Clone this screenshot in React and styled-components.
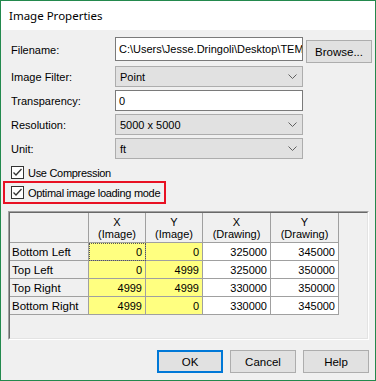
import styled, { createGlobalStyle } from "styled-components";

const GlobalStyle = createGlobalStyle`
  html, body {
    margin: 0;
    padding: 0;
    background: #ffffff;
  }
  * {
    box-sizing: border-box;
  }
`;

const corners = [
  { name: "Bottom Left", xi: "0", yi: "0", xd: "325000", yd: "345000" },
  { name: "Top Left", xi: "0", yi: "4999", xd: "325000", yd: "350000" },
  { name: "Top Right", xi: "4999", yi: "4999", xd: "330000", yd: "350000" },
  { name: "Bottom Right", xi: "4999", yi: "0", xd: "330000", yd: "345000" },
];

function Chevron() {
  return (
    <svg width="9" height="5" viewBox="0 0 9 5">
      <polyline points="0.5,0.5 4.5,4.5 8.5,0.5" fill="none" stroke="#606060" strokeWidth="1" />
    </svg>
  );
}

function CheckBox() {
  return (
    <Box>
      <svg width="11" height="11" viewBox="0 0 11 11">
        <polyline points="1.5,5.5 4,8 9.5,2" fill="none" stroke="#333" strokeWidth="1.3" />
      </svg>
    </Box>
  );
}

function Combo({ value }) {
  return (
    <ComboBox>
      <span>{value}</span>
      <Chevron />
    </ComboBox>
  );
}

export default function App() {
  return (
    <>
      <GlobalStyle />
      <Window>
        <TitleBar>Image Properties</TitleBar>
        <Body>
          <Form>
            <Label>Filename:</Label>
            <TextBox h={24}>C:\Users\Jesse.Dringoli\Desktop\TEM</TextBox>
            <Button top={3}>Browse...</Button>

            <Label>Image Filter:</Label>
            <Combo value="Point" />
            <span />

            <Label>Transparency:</Label>
            <TextBox h={21}>0</TextBox>
            <span />

            <Label>Resolution:</Label>
            <Combo value="5000 x 5000" />
            <span />

            <Label>Unit:</Label>
            <Combo value="ft" />
            <span />
          </Form>

          <CheckRow>
            <CheckBox />
            <span>Use Compression</span>
          </CheckRow>

          <Highlight>
            <CheckRow inner>
              <CheckBox />
              <span>Optimal image loading mode</span>
            </CheckRow>
          </Highlight>

          <GridFrame>
            <GridInner>
              <Grid>
                <HeadCell />
                <HeadCell>X<br />(Image)</HeadCell>
                <HeadCell>Y<br />(Image)</HeadCell>
                <HeadCell>X<br />(Drawing)</HeadCell>
                <HeadCell>Y<br />(Drawing)</HeadCell>
                {corners.map((c, i) => (
                  <Row key={c.name}>
                    <RowHead>{c.name}</RowHead>
                    <Cell tone="yellow" focused={i === 0}>{c.xi}</Cell>
                    <Cell tone="yellow">{c.yi}</Cell>
                    <Cell>{c.xd}</Cell>
                    <Cell>{c.yd}</Cell>
                  </Row>
                ))}
              </Grid>
            </GridInner>
          </GridFrame>

          <Buttons>
            <Button primary>OK</Button>
            <Button>Cancel</Button>
            <Button>Help</Button>
          </Buttons>
        </Body>
      </Window>
    </>
  );
}

const Window = styled.div`
  width: 376px;
  height: 381px;
  border: 1px solid #23894d;
  display: flex;
  flex-direction: column;
  font-family: "Liberation Sans", Arial, sans-serif;
  font-size: 11px;
  color: #000;
  background: #f0f0f0;
`;

const TitleBar = styled.div`
  height: 30px;
  background: #fff;
  display: flex;
  align-items: center;
  padding-left: 8px;
  font-family: "Noto Sans", "Open Sans", sans-serif;
  font-size: 11.5px;
  color: #000;
`;

const Body = styled.div`
  flex: 1;
  display: flex;
  flex-direction: column;
  padding: 7px 6px 7px 7px;
`;

const Form = styled.div`
  display: grid;
  grid-template-columns: 101px 188px 66px;
  column-gap: 3px;
  row-gap: 3px;
  margin-left: 3px;
`;

const Label = styled.div`
  display: flex;
  align-items: center;
  white-space: nowrap;
`;

const TextBox = styled.div`
  height: ${(p) => p.h}px;
  background: #fff;
  border: 1px solid #7a7a7a;
  padding: 0 3px;
  display: flex;
  align-items: center;
  white-space: nowrap;
  overflow: hidden;
`;

const ComboBox = styled.div`
  height: 21px;
  background: #e1e1e1;
  border: 1px solid #adadad;
  padding: 0 5px 0 4px;
  display: flex;
  align-items: center;
  justify-content: space-between;
  white-space: nowrap;
`;

const Button = styled.div`
  align-self: start;
  margin-top: ${(p) => p.top || 0}px;
  width: 66px;
  height: 23px;
  background: #e1e1e1;
  border: ${(p) => (p.primary ? "2px solid #0078d7" : "1px solid #adadad")};
  display: flex;
  align-items: center;
  justify-content: center;
  font-size: 11.5px;
`;

const CheckRow = styled.div`
  display: flex;
  align-items: center;
  gap: 4px;
  height: 13px;
  margin-top: ${(p) => (p.inner ? 0 : 7)}px;
  margin-left: ${(p) => (p.inner ? 0 : 3)}px;
  white-space: nowrap;
  font-size: 11px;
  letter-spacing: -0.3px;
`;

const Box = styled.div`
  width: 13px;
  height: 13px;
  border: 1px solid #333;
  background: #fff;
  display: flex;
  align-items: center;
  justify-content: center;
`;

const Highlight = styled.div`
  align-self: flex-start;
  margin-top: 2px;
  margin-left: -5px;
  border: 2px solid #e81123;
  padding: 3px 4px 3px 6px;
`;

const GridFrame = styled.div`
  margin-top: 7px;
  height: 129px;
  border: 1px solid;
  border-color: #a0a0a0 #ffffff #ffffff #a0a0a0;
`;

const GridInner = styled.div`
  height: 100%;
  border: 1px solid;
  border-color: #696969 #e3e3e3 #e3e3e3 #696969;
  background: #f0f0f0;
`;

const Grid = styled.div`
  display: grid;
  grid-template-columns: 79px 57px 57px 68px 68px;
  grid-template-rows: 30px repeat(4, 18px);
  width: max-content;
`;

const Row = styled.div`
  display: contents;
`;

const HeadCell = styled.div`
  background: #f0f0f0;
  border-right: 1px solid #a0a0a0;
  border-bottom: 1px solid #a0a0a0;
  text-align: center;
  line-height: 12px;
  padding-top: 3px;
`;

const RowHead = styled.div`
  background: #f0f0f0;
  border-right: 1px solid #a0a0a0;
  border-bottom: 1px solid #a0a0a0;
  display: flex;
  align-items: center;
  padding-left: 2px;
  white-space: nowrap;
  font-size: 11.5px;
`;

const Cell = styled.div`
  background: ${(p) => (p.tone === "yellow" ? "#ffff80" : "#ffffff")};
  border-right: 1px solid #a0a0a0;
  border-bottom: 1px solid #a0a0a0;
  display: flex;
  align-items: center;
  justify-content: flex-end;
  padding-right: 3px;
  outline: ${(p) => (p.focused ? "1px dotted #555" : "none")};
  outline-offset: -1px;
`;

const Buttons = styled.div`
  margin-top: 10px;
  display: flex;
  justify-content: flex-end;
  gap: 7px;
`;
